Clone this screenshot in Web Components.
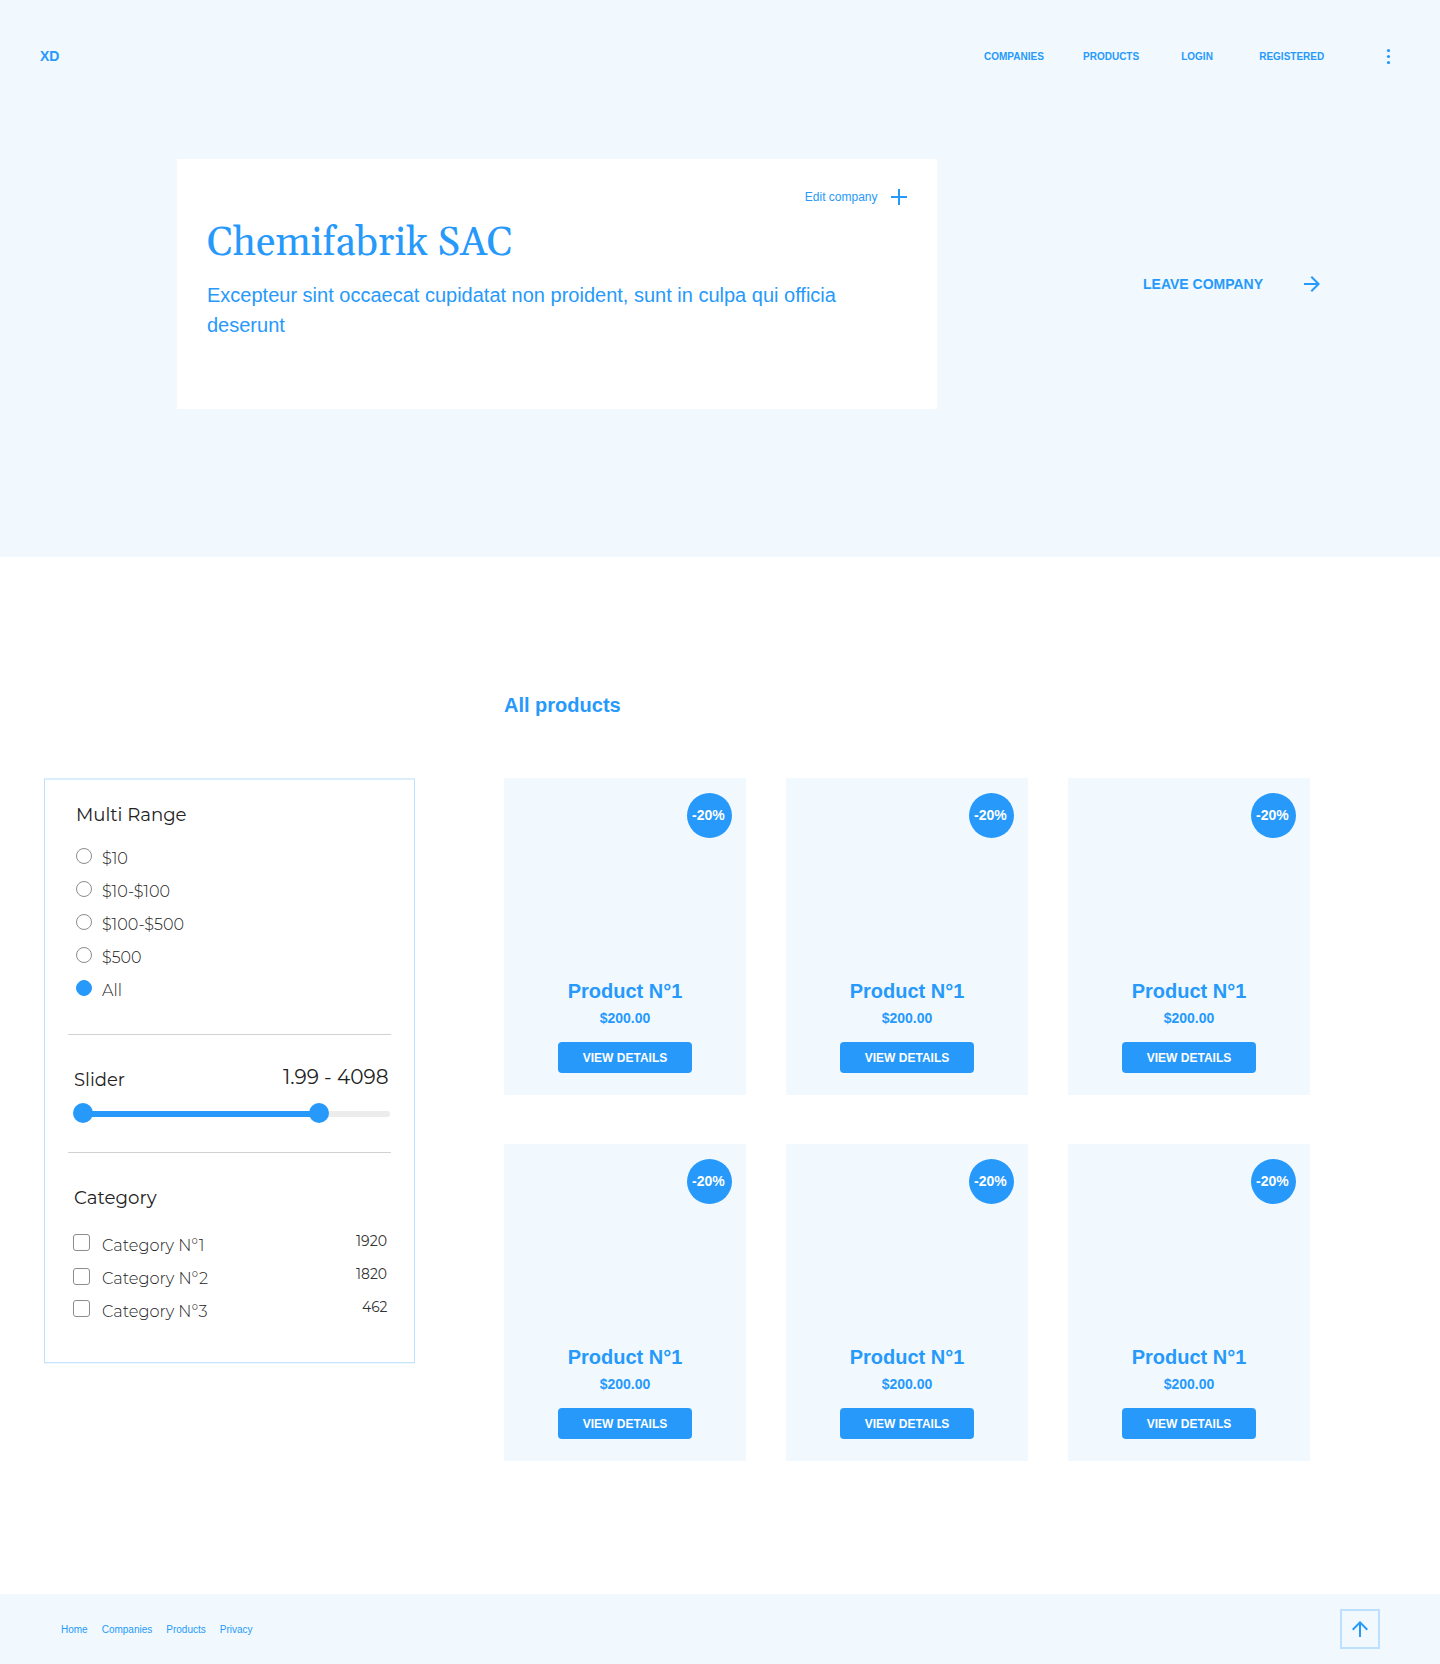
<!DOCTYPE html>
<html lang="en">
<head>
<meta charset="utf-8">
<title>Chemifabrik SAC</title>
<style>
  body { margin: 0; background: #fff; color: #2699fb; font-family: Arial, "Liberation Sans", sans-serif; }
</style>
</head>
<body>
<company-page></company-page>
<script>
const define = (name, html, init) => customElements.define(name, class extends HTMLElement {
  connectedCallback() {
    if (this.shadowRoot) return;
    const t = document.createElement('template');
    t.innerHTML = typeof html === 'function' ? html(this) : html;
    this.attachShadow({ mode: 'open' }).appendChild(t.content.cloneNode(true));
    if (init) init(this);
  }
});

/* Text set to an exact advance width, stretching the glyphs horizontally. */
define('fit-text', `
  <style>
    :host { display: block; white-space: nowrap; flex: none; }
    span { display: inline-block; transform-origin: 0 0; vertical-align: top; }
  </style><span><slot></slot></span>`, el => {
  const w = +el.getAttribute('w');
  const s = el.shadowRoot.querySelector('span');
  el.style.width = w + 'px';
  s.style.transform = `scaleX(${w / s.getBoundingClientRect().width})`;
});

define('site-header', `
  <style>
    :host { display: flex; align-items: center; height: 112px; padding: 0 49px 0 40px; font-weight: bold; }
    .logo { font-size: 14px; line-height: 16px; flex: 1; }
    nav { display: grid; grid-template-columns: 99px 98.2px 78px 124.8px; font-size: 10px; line-height: 11px; padding-top: 1px; }
    svg { display: block; }
  </style>
  <div class="logo">XD</div>
  <nav><span>COMPANIES</span><span>PRODUCTS</span><span>LOGIN</span><span>REGISTERED</span></nav>
  <svg width="7" height="16" viewBox="0 0 7 16" fill="#2699fb"><circle cx="4.5" cy="2.5" r="1.6"/><circle cx="4.5" cy="8.5" r="1.6"/><circle cx="4.5" cy="14.5" r="1.6"/></svg>`);

define('company-hero', `
  <style>
    :host { display: flex; align-items: center; padding: 47px 120px 0 177px; }
    .card { box-sizing: border-box; width: 760px; height: 250px; padding: 30px; background: #fff; }
    .edit { display: flex; justify-content: flex-end; align-items: center; gap: 13.5px; font-size: 12px; line-height: 14px; }
    svg { display: block; fill: none; stroke: #2699fb; stroke-width: 2; }
    h1 { margin: 16px 0 13px; font: 400 40px/46px Georgia, Gelasio, "Liberation Serif", serif; }
    p { margin: 0; font-size: 20px; line-height: 30px; }
    .leave { display: flex; flex: 1; justify-content: space-between; align-items: center; margin-left: 206px; font-size: 14px; line-height: 16px; font-weight: bold; }
  </style>
  <div class="card">
    <div class="edit"><span>Edit company</span><svg width="16" height="16"><path d="M8 0V16M0 8H16"/></svg></div>
    <h1><fit-text w="305.5">Chemifabrik SAC</fit-text></h1>
    <p>Excepteur sint occaecat cupidatat non proident, sunt in culpa qui officia deserunt</p>
  </div>
  <div class="leave"><span>LEAVE COMPANY</span><svg width="16" height="16"><path d="M0 8H14.5M7.3 .7L14.6 8L7.3 15.3"/></svg></div>`);

define('radio-row', `
  <style>
    :host { display: flex; gap: 10px; height: 19px; }
    i { box-sizing: border-box; width: 16px; height: 16px; border: 1px solid #8c8c8c; border-radius: 50%; }
    :host([checked]) i { background: #2699fb; border-color: #2699fb; }
    div { padding-top: 1px; }
  </style><i></i><div><slot></slot></div>`);

define('check-row', `
  <style>
    :host { display: flex; height: 33px; }
    i { box-sizing: border-box; width: 17px; height: 17px; margin: var(--box-top, 2px) 12px 0 0; border: 1px solid #8c8c8c; border-radius: 3px; }
    .name { margin-top: 4px; flex: 1; }
    .count { margin-top: 1px; font-size: 14px; line-height: 17px; font-weight: 400; color: #333; }
  </style><i></i><div class="name"><slot></slot></div><div class="count"><slot name="count"></slot></div>`);

define('range-slider', `
  <style>
    :host { display: flex; align-items: center; height: 20px; }
    b { width: 20px; height: 20px; border-radius: 50%; background: #2699fb; flex: none; z-index: 1; }
    .on { width: 236px; height: 6px; margin: 2px -10px 0; background: #2699fb; }
    .off { flex: 1; height: 6px; margin: 2px 0 0 -10px; background: #ececec; border-radius: 0 3px 3px 0; }
  </style><b></b><div class="on"></div><b></b><div class="off"></div>`);

define('filter-panel', `
  <style>
    :host { display: block; box-sizing: border-box; width: 371px; height: 585px; padding: 24px 23px 0;
      border: 1px solid #bce0fd; border-top: 2px solid #dbeefe; border-bottom-color: #c6e5fd; box-shadow: 0 1px #eef7ff;
      color: #222; font: 300 16px/19px Montserrat, Lato, sans-serif; }
    h2 { margin: 0; font-size: 18px; line-height: 22px; font-weight: 400; }
    hr { margin: 0; border: 0; height: 1px; background: #d2d2d2; }
    .radios { display: flex; flex-direction: column; gap: 14px; padding: 22px 0 35px 7.5px; }
    .head { display: flex; justify-content: space-between; padding: 30px 3px 12.4px 6px; }
    .head h2 { margin-top: 4px; }
    .value { font-size: 20px; line-height: 24px; font-weight: 400; height: 26px; }
    range-slider { margin: 0 1px 28.6px 5px; }
    .cats { padding: 23px 4px 0 5px; }
  </style>
  <h2 style="padding-left:8px"><fit-text w="110.5">Multi Range</fit-text></h2>
  <div class="radios">
    <radio-row><fit-text w="26">$10</fit-text></radio-row>
    <radio-row><fit-text w="68">$10-$100</fit-text></radio-row>
    <radio-row><fit-text w="82">$100-$500</fit-text></radio-row>
    <radio-row><fit-text w="39.5">$500</fit-text></radio-row>
    <radio-row checked><fit-text w="20">All</fit-text></radio-row>
  </div>
  <hr>
  <div class="head"><h2><fit-text w="51">Slider</fit-text></h2><div class="value"><fit-text w="105.5">1.99 - 4098</fit-text></div></div>
  <range-slider></range-slider>
  <hr>
  <h2 style="padding:34px 0 0 5.5px"><fit-text w="82.5">Category</fit-text></h2>
  <div class="cats">
    <check-row><fit-text w="102.5">Category N°1</fit-text><fit-text slot="count" w="31">1920</fit-text></check-row>
    <check-row style="--box-top:3px"><fit-text w="106">Category N°2</fit-text><fit-text slot="count" w="31">1820</fit-text></check-row>
    <check-row><fit-text w="105.5">Category N°3</fit-text><fit-text slot="count" w="25.5">462</fit-text></check-row>
  </div>`);

define('product-card', `
  <style>
    :host { display: flex; flex-direction: column; align-items: center; position: relative; box-sizing: border-box;
      width: 242px; height: 317px; padding-top: 202px; background: #f1f9ff; font-weight: bold; }
    .badge { position: absolute; top: 15px; right: 14px; box-sizing: border-box; width: 45px; height: 45px; padding: 14px 0 0 5px;
      border-radius: 50%; background: #2699fb; color: #fff; font-size: 14px; line-height: 16px; }
    .name { font-size: 20px; line-height: 22px; }
    .price { margin: 8px 0 16px; font-size: 14px; line-height: 16px; }
    button { box-sizing: border-box; width: 134px; height: 31px; padding: 9px 0 8px; border: 0; border-radius: 4px;
      background: #2699fb; color: #fff; font: bold 12px/14px Arial, "Liberation Sans", sans-serif; }
  </style>
  <div class="badge">-20%</div>
  <div class="name"><slot></slot></div><div class="price">$200.00</div><button>VIEW DETAILS</button>`);

define('site-footer', `
  <style>
    :host { display: flex; box-sizing: border-box; justify-content: space-between; align-items: center; height: 70px; padding: 0 60px 0 61px; background: #f1f9ff; }
    nav { display: flex; gap: 14px; font-size: 10px; line-height: 11px; }
    .up { box-sizing: border-box; width: 40px; height: 40px; border: 2px solid #bce0fd; padding: 10px; }
    svg { display: block; fill: none; stroke: #2699fb; stroke-width: 2; }
  </style>
  <nav><span>Home</span><span>Companies</span><span>Products</span><span>Privacy</span></nav>
  <div class="up"><svg width="16" height="16"><path d="M8 16V1.5M.7 8.7L8 1.4L15.3 8.7"/></svg></div>`);

define('company-page', `
  <style>
    :host { display: block; width: 1440px; }
    .top { height: 557px; background: #f1f9ff; }
    main { display: flex; box-sizing: border-box; height: 1037px; padding: 137px 130px 0 44px; justify-content: space-between; }
    filter-panel { margin-top: 84px; }
    h2 { margin: 0 0 62px; font-size: 20px; line-height: 22px; }
    .grid { display: grid; grid-template-columns: repeat(3, 242px); gap: 49px 40px; }
  </style>
  <div class="top"><site-header></site-header><company-hero></company-hero></div>
  <main>
    <filter-panel></filter-panel>
    <section>
      <h2>All products</h2>
      <div class="grid">${'<product-card>Product N°1</product-card>'.repeat(6)}</div>
    </section>
  </main>
  <site-footer></site-footer>`);
</script>
</body>
</html>
